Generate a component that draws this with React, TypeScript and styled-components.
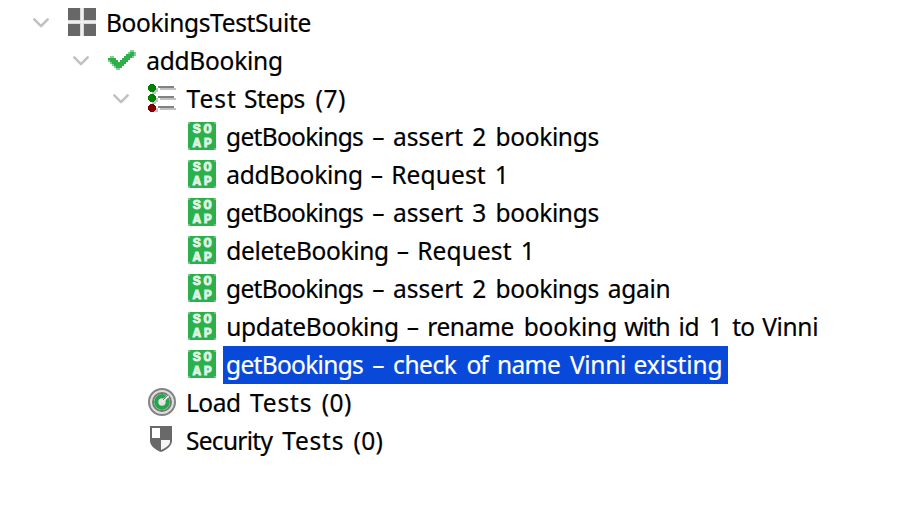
import React from 'react';
import styled, { createGlobalStyle } from 'styled-components';

const GlobalStyle = createGlobalStyle`
  body {
    margin: 0;
    background: #fff;
  }
`;

const Tree = styled.div`
  display: flex;
  flex-direction: column;
  box-sizing: border-box;
  height: 514px;
  padding-top: 4px;
  overflow: hidden;
  background: #fff;
  color: #000;
  font: 24.5px/38px 'Noto Sans', 'Open Sans', sans-serif;
  -webkit-text-stroke: 0.2px currentColor;
`;

const Row = styled.div<{ $depth: number }>`
  display: flex;
  align-items: stretch;
  height: 38px;
  padding-left: ${(p) => 28 + p.$depth * 40}px;
`;

const Toggle = styled.div`
  flex: none;
  width: 40px;
  height: 38px;

  svg {
    display: block;
  }
`;

const IconSlot = styled.div`
  flex: none;
  width: 28px;
  height: 28px;
  margin-top: 4px;

  svg {
    display: block;
  }
`;

const Label = styled.div<{ $selected?: boolean }>`
  box-sizing: border-box;
  height: 38px;
  margin-left: 7px;
  padding: 0 3px;
  white-space: pre;
  color: ${(p) => (p.$selected ? '#fff' : '#000')};
  background: ${(p) => (p.$selected ? '#0849da' : 'transparent')};
  width: ${(p) => (p.$selected ? '505px' : 'auto')};
`;

const Word = styled.span<{ $tracking: number; $gap: number }>`
  letter-spacing: ${(p) => p.$tracking}px;
  margin-left: ${(p) => p.$gap}px;
`;

/* Paints a low-resolution icon: every mark is [colour, x, y, width, height] in 2px cells. */
type Mark = [string, number, number, number, number];

const PixelIcon = ({ marks }: { marks: Mark[] }) => (
  <svg width="28" height="28" viewBox="0 0 14 14" shapeRendering="crispEdges">
    {marks.map(([fill, x, y, w, h], i) => (
      <rect key={i} fill={fill} x={x} y={y} width={w} height={h} />
    ))}
  </svg>
);

const Chevron = () => (
  <svg width="40" height="38" viewBox="0 0 40 38">
    <path d="M6.3 15.3 L13 22.2 L19.7 15.3" fill="none" stroke="#c1c1c1" strokeWidth="2.5" strokeLinecap="round" strokeLinejoin="round" />
  </svg>
);

const suiteMarks: Mark[] = [
  ['#d9d9d9', 0, 0, 14, 14],
  ['#676767', 0, 0, 6, 6],
  ['#676767', 8, 0, 6, 6],
  ['#676767', 0, 8, 6, 6],
  ['#676767', 8, 8, 6, 6],
  ['#efefef', 6.5, 0, 1, 14],
  ['#efefef', 0, 6.5, 14, 1],
];

const G = '#2bb04a';
const L = '#7fd092';
const checkMarks: Mark[] = [
  [L, 11, 2, 2, 1],
  [G, 11, 3, 2, 1],
  [L, 10, 3, 1, 1],
  [L, 13, 3, 1, 1],
  [G, 9, 4, 4, 1],
  [L, 13, 4, 1, 1],
  [L, 1, 5, 2, 1],
  [G, 8, 5, 4, 1],
  [L, 12, 5, 1, 1],
  [G, 0, 6, 4, 1],
  [G, 7, 6, 4, 1],
  [L, 0, 7, 1, 1],
  [G, 1, 7, 4, 1],
  [G, 6, 7, 4, 1],
  [L, 1, 8, 1, 1],
  [G, 2, 8, 7, 1],
  [G, 3, 9, 5, 1],
  [L, 2, 9, 1, 1],
  [G, 4, 10, 3, 1],
  [L, 3, 10, 1, 1],
  [L, 4, 11, 2, 1],
];

const stepMarks: Mark[] = ['#008200', '#008200', '#820000'].flatMap((c, i): Mark[] => {
  const y = i * 5;
  return [
    ['#c2c2c2', 3, y + 2, 2, 2],
    ['#c2c2c2', 2, y + 4, 2, 1],
    ['#c2c2c2', 6, y + 2, 8, 1],
    ['#828282', 5, y + 1, 8, 1],
    [c, 1, y, 2, 4],
    [c, 0, y + 1, 4, 2],
    [c, 0.5, y + 0.5, 3, 3],
  ];
});

const SoapIcon = () => (
  <svg width="28" height="28" viewBox="0 0 28 28">
    <rect width="28" height="28" fill="#2cb04b" />
    <path d="M0 0h2v2H0zM26 0h2v2h-2zM0 26h2v2H0zM26 26h2v2h-2z" fill="#7acb8b" />
    <g fill="#dff4e4" stroke="#dff4e4" strokeWidth="0.9" fontFamily="'Liberation Mono', monospace" fontWeight="700" fontSize="13.5" textAnchor="middle">
      <text x="8.9" y="11.2">S</text>
      <text x="19.6" y="11.2">O</text>
      <text x="8.9" y="25.4">A</text>
      <text x="19.8" y="25.4">P</text>
    </g>
  </svg>
);

const LoadIcon = () => (
  <svg width="28" height="28" viewBox="0 0 28 28">
    <circle cx="14" cy="14" r="13" fill="#dedede" stroke="#848484" strokeWidth="2" />
    <circle cx="14" cy="14" r="9" fill="#fff" stroke="#777" strokeWidth="2" />
    <circle cx="14" cy="14" r="5.8" fill="#e8dfe8" stroke="#20a847" strokeWidth="4.2" />
    <path d="M14 14 L20.5 7.5" stroke="#eee6ee" strokeWidth="2.6" />
    <path d="M15 12 L20 7" stroke="#777" strokeWidth="1" />
  </svg>
);

const ShieldIcon = () => (
  <svg width="28" height="28" viewBox="0 0 28 28">
    <path d="M2 0H24V15C24 20 18 24 13 26C8 24 2 20 2 15Z" fill="#696969" />
    <path d="M4 2H12V12H4Z" fill="#fff" />
    <path d="M13 14H22V16C22 19 17 22.5 13 24Z" fill="#f4f4f4" />
  </svg>
);

const icons = {
  suite: <PixelIcon marks={suiteMarks} />,
  check: <PixelIcon marks={checkMarks} />,
  steps: <PixelIcon marks={stepMarks} />,
  soap: <SoapIcon />,
  load: <LoadIcon />,
  shield: <ShieldIcon />,
};

/* A word with its letter tracking and extra gap before it. */
type W = [string, number, number];
type Node = { depth: number; icon: keyof typeof icons; open?: boolean; selected?: boolean; words: W[] };

const assertWords = (n: string): W[] => [
  ['getBookings', -0.68, 0],
  ['–', 0, 2.8],
  ['assert', 0.03, 2.1],
  [n, 0, 2.5],
  ['bookings', -0.33, 2.9],
];

const nodes: Node[] = [
  { depth: 0, icon: 'suite', open: true, words: [['BookingsTestSuite', -0.35, 0]] },
  { depth: 1, icon: 'check', open: true, words: [['addBooking', -0.25, 0.2]] },
  { depth: 2, icon: 'steps', open: true, words: [['Test', 1.01, 0.5], ['Steps', -0.42, 0.8], ['(7)', 0.57, 4.3]] },
  { depth: 3, icon: 'soap', words: assertWords('2') },
  { depth: 3, icon: 'soap', words: [['addBooking', -0.25, 0.2], ['–', 0, 1.7], ['Request', 0.12, 1.8], ['1', 0, 2.7]] },
  { depth: 3, icon: 'soap', words: assertWords('3') },
  { depth: 3, icon: 'soap', words: [['deleteBooking', -0.33, 0.2], ['–', 0, 1.6], ['Request', 0.12, 1.8], ['1', 0, 2.7]] },
  { depth: 3, icon: 'soap', words: [...assertWords('2'), ['again', -0.3, 2.6]] },
  {
    depth: 3,
    icon: 'soap',
    words: [
      ['updateBooking', -0.34, 0.2],
      ['–', 0, 1.7],
      ['rename', -0.35, 1.8],
      ['booking', -0.13, 3.2],
      ['with', -1, 0.7],
      ['id', -0.3, 2.4],
      ['1', 0, 3.2],
      ['to', -0.9, 3.1],
      ['Vinni', -0.33, 1.6],
    ],
  },
  {
    depth: 3,
    icon: 'soap',
    selected: true,
    words: [
      ['getBookings', -0.68, 0],
      ['–', 0, 2.8],
      ['check', -0.42, 2.1],
      ['of', -0.9, 3.5],
      ['name', -0.6, 2.7],
      ['Vinni', -0.28, 3.4],
      ['existing', -0.1, 1.1],
    ],
  },
  { depth: 2, icon: 'load', words: [['Load', -0.47, 0], ['Tests', 0.85, 3], ['(0)', 0.47, 3]] },
  { depth: 2, icon: 'shield', words: [['Security', -0.71, 0], ['Tests', 0.77, 3.6], ['(0)', 0.42, 2.9]] },
];

export default function App() {
  return (
    <>
      <GlobalStyle />
      <Tree role="tree">
        {nodes.map((node, i) => (
          <Row key={i} $depth={node.depth} role="treeitem" aria-selected={!!node.selected}>
            <Toggle>{node.open && <Chevron />}</Toggle>
            <IconSlot>{icons[node.icon]}</IconSlot>
            <Label $selected={node.selected}>
              {node.words.map(([text, tracking, gap], j) => (
                <React.Fragment key={j}>
                  {j > 0 && ' '}
                  <Word $tracking={tracking} $gap={gap}>
                    {text}
                  </Word>
                </React.Fragment>
              ))}
            </Label>
          </Row>
        ))}
      </Tree>
    </>
  );
}
